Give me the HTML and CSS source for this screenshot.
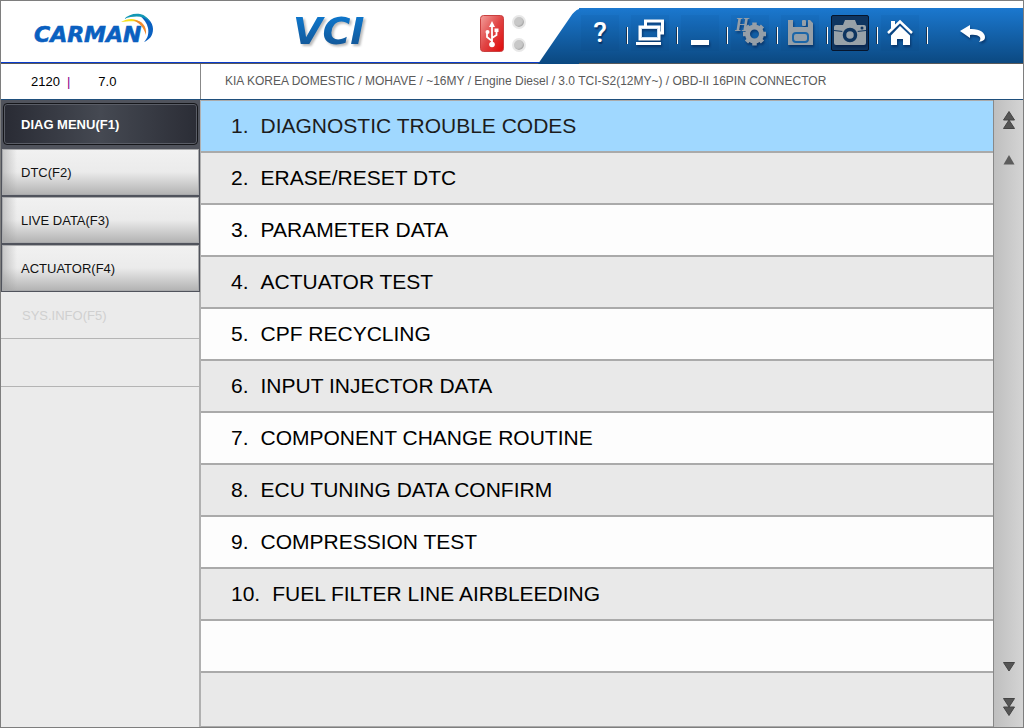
FILE: index.html
```html
<!DOCTYPE html>
<html lang="en">
<head>
<meta charset="utf-8">
<title>CARMAN VCI</title>
<link rel="stylesheet" href="styles.css">
</head>
<body>
<div class="app">
  <header class="header">
    <svg class="logo" width="140" height="40" viewBox="0 0 140 40" role="img" aria-label="CARMAN">
      <text class="logo-text" x="3" y="32">CARMAN</text>
      <path fill="#0a60c0" d="M108 5c8 1 14 7 14 14 0 7-4 11-9 13 4-4 5-9 4-14-1-5-4-9-9-13z"/>
      <path fill="#1398b4" d="M93 9c4-4 10-6 16-5 5 1 8 4 10 8-6-6-14-7-26-3z"/>
      <path fill="#f7e01a" d="M90 12c7-4 15-4 20 1-5-2-10-2-20-1z"/>
      <path fill="#f28a2c" d="M102 10c9 0 14 6 13 15-2-7-6-12-13-15z"/>
    </svg>
    <svg class="vci" width="90" height="44" viewBox="0 0 90 44" role="img" aria-label="VCI">
      <defs><linearGradient id="vciFill" x1="0" y1="0" x2="0" y2="1"><stop offset="0" stop-color="#0d7ed8"/><stop offset="1" stop-color="#14508c"/></linearGradient></defs>
      <text class="vci-text" x="5" y="35" fill="url(#vciFill)">VCI</text>
    </svg>
    <div class="status">
      <svg width="24" height="37" viewBox="0 0 24 37" role="img" aria-label="USB">
        <defs><linearGradient id="usbFill" x1="0" y1="0" x2="1" y2="1"><stop offset="0" stop-color="#f3a09c"/><stop offset=".5" stop-color="#e04444"/><stop offset="1" stop-color="#e00808"/></linearGradient></defs>
        <rect x=".5" y=".5" width="23" height="36" rx="3" fill="url(#usbFill)" stroke="#c94040"/>
        <path d="M12 10v19M12 26l-5-4v-5M12 23l4.500-3v-5" fill="none" stroke="#fff" stroke-width="1.800"/>
        <path d="M12 6l3 6H9zM14.500 13.500h4v3.500h-4z" fill="#fff"/>
        <circle cx="7.500" cy="17" r="2" fill="#fff"/><circle cx="12" cy="29.500" r="2.800" fill="#fff"/>
      </svg>
      <div class="lamps"><span class="lamp"></span><span class="lamp"></span></div>
    </div>
    <nav class="toolbar" aria-label="Tools">
      <svg class="slant" width="41" height="56" viewBox="0 0 41 56" aria-hidden="true">
        <defs><linearGradient id="barFill" x1="0" y1="0" x2="0" y2="1"><stop offset="0" stop-color="#1b78cf"/><stop offset="1" stop-color="#0b4880"/></linearGradient></defs>
        <path d="M0 56L33 8Q38 0 46 0V56z" fill="url(#barFill)"/>
      </svg>
      <div class="tools">
        <div class="tool"><button class="tool-btn help" aria-label="Help">?</button></div>
        <div class="tool"><button class="tool-btn" aria-label="Screens"><svg width="38" height="36" viewBox="0 0 38 36" fill="none" stroke="#fff">
          <path d="M14.500 11V6h17v12h-3" stroke-width="3"/><path d="M9 12h19v12H9z" stroke-width="3"/><path d="M10.500 13.500h16v9h-16z" stroke="#cfe2f4" stroke-width="1"/><path d="M5 28.500h25" stroke-width="3"/></svg></button></div>
        <div class="tool"><button class="tool-btn" aria-label="Minimize"><svg width="38" height="36" viewBox="0 0 38 36"><path d="M10 25h18v5H10z" fill="#fff"/></svg></button></div>
        <div class="tool"><button class="tool-btn" aria-label="Hardware settings"><svg width="38" height="36" viewBox="0 0 38 36">
          <text class="gear-text" x="4" y="16">H</text><path d="M15 12.500v3.500" stroke="#959fa8" stroke-width="2"/>
          <circle cx="23.500" cy="19" r="7" fill="none" stroke="#959fa8" stroke-width="5"/>
          <g stroke="#959fa8" stroke-width="4.500"><path d="M23.500 7.500v4M23.500 26.500v4M12 19h4M31 19h4M15.500 11l3 3M28.500 24l3 3M31.500 11l-3 3M18.500 24l-3 3"/></g></svg></button></div>
        <div class="tool"><button class="tool-btn" aria-label="Save"><svg width="38" height="36" viewBox="0 0 38 36">
          <path d="M7 5h5v7h15V5h2l3 3v22H7z" fill="#959fa8"/>
          <rect x="21" y="5" width="4" height="6" rx="1" fill="#959fa8"/><path d="M7 12h25v2H7z" fill="#959fa8"/>
          <rect x="12" y="18" width="15" height="9" rx="3" fill="none" stroke="#1c66a8" stroke-width="2"/></svg></button></div>
        <div class="tool"><button class="tool-btn active" aria-label="Capture"><svg width="36" height="34" viewBox="1 1 36 34">
          <path d="M3 12q0-2 2-2h7l2-5h10l2 5h7q2 0 2 2v16q0 2-2 2H5q-2 0-2-2z" fill="#98a1a8"/>
          <path d="M3 15.500l9 1M26 16.500l9-1" stroke="#0f3560"/>
          <circle cx="19" cy="20" r="8.500" fill="#98a1a8"/><circle cx="19" cy="20" r="5.500" fill="none" stroke="#0f3560" stroke-width="3.500"/><circle cx="31" cy="13" r="1.500" fill="#0f3560"/></svg></button></div>
        <div class="tool"><button class="tool-btn" aria-label="Home"><svg width="38" height="36" viewBox="0 0 38 36">
          <path d="M10 6h4v5l-4 3z" fill="#fff"/><path d="M7 18L19 6.500 31 18" fill="none" stroke="#fff" stroke-width="2.500"/><path d="M19 11l10 9.500V30h-7v-6h-6v6h-6v-9.500z" fill="#fff"/></svg></button></div>
        <button class="back" aria-label="Back"><svg width="26" height="36" viewBox="0 0 26 36"><path d="M0 16l10-6v4c10-.5 15 4 15 8 0 3-2 4-6 5 4-5-1-8-9-7v3z" fill="#fff"/></svg></button>
      </div>
    </nav>
  </header>
  <div class="infobar">
    <div class="version"><span>2120</span><span class="bar">|</span><span class="number">7.0</span></div>
    <div class="path">KIA KOREA DOMESTIC / MOHAVE / ~16MY / Engine Diesel / 3.0 TCI-S2(12MY~) / OBD-II 16PIN CONNECTOR</div>
  </div>
  <div class="body">
    <nav class="side" aria-label="Menu">
      <div class="side-active">
        <button class="side-btn selected">DIAG MENU(F1)</button>
        <button class="side-btn">DTC(F2)</button>
        <button class="side-btn">LIVE DATA(F3)</button>
        <button class="side-btn">ACTUATOR(F4)</button>
      </div>
      <button class="side-off" disabled>SYS.INFO(F5)</button>
      <div class="side-off"></div>
    </nav>
    <main class="list">
      <button class="row current"><span>1.</span><span>DIAGNOSTIC TROUBLE CODES</span></button>
      <button class="row"><span>2.</span><span>ERASE/RESET DTC</span></button>
      <button class="row"><span>3.</span><span>PARAMETER DATA</span></button>
      <button class="row"><span>4.</span><span>ACTUATOR TEST</span></button>
      <button class="row"><span>5.</span><span>CPF RECYCLING</span></button>
      <button class="row"><span>6.</span><span>INPUT INJECTOR DATA</span></button>
      <button class="row"><span>7.</span><span>COMPONENT CHANGE ROUTINE</span></button>
      <button class="row"><span>8.</span><span>ECU TUNING DATA CONFIRM</span></button>
      <button class="row"><span>9.</span><span>COMPRESSION TEST</span></button>
      <button class="row"><span>10.</span><span>FUEL FILTER LINE AIRBLEEDING</span></button>
      <div class="row"></div>
      <div class="row last"></div>
    </main>
    <div class="scroll">
      <div class="scroll-group">
        <button class="scroll-btn" aria-label="First page"><svg width="14" height="20" viewBox="0 0 14 20" fill="#555" stroke="#444"><path d="M7 10l5.500 8.500h-11zM7 1.500l5.500 8.500h-11z"/></svg></button>
        <button class="scroll-btn" aria-label="Previous page"><svg width="14" height="20" viewBox="0 0 14 20" fill="#5c5c5c"><path d="M7 5l5.500 9.500h-11z"/></svg></button>
      </div>
      <div class="scroll-group">
        <button class="scroll-btn" aria-label="Next page"><svg width="14" height="20" viewBox="0 0 14 20" fill="#555" stroke="#444"><path d="M1.500 5.500h11L7 14z"/></svg></button>
        <button class="scroll-btn" aria-label="Last page"><svg width="14" height="20" viewBox="0 0 14 20" fill="#555" stroke="#444"><path d="M1.500 1.500h11L7 10zM1.500 10h11L7 18.500z"/></svg></button>
      </div>
    </div>
  </div>
</div>
</body>
</html>
```
FILE: styles.css
```css
* { box-sizing: border-box; }
body { margin: 0; font-family: "Liberation Sans", Arial, sans-serif; background: #fff; }
button { font: inherit; color: inherit; border: 0; background: none; padding: 0; margin: 0; text-align: left; }
svg { display: block; flex: none; }

.app { display: flex; flex-direction: column; min-height: 100vh; border: 1px solid #7e7e7e; }

.header { display: flex; align-items: flex-start; height: 62px; background: linear-gradient(#0a3ccc, #0a3ccc) left bottom 0 / 100% 1px no-repeat #fff; }
.logo { margin: 9px 0 0 30px; }
.logo-text { font: italic bold 22px "DejaVu Sans", sans-serif; fill: #0a60c0; stroke: #0a60c0; stroke-width: .6px; }
.vci { margin: 8px 0 0 117px; filter: drop-shadow(2px 2px 1px #bbb); }
.vci-text { font: italic bold 38px "DejaVu Sans", sans-serif; }
.status { display: flex; gap: 8px; margin: 14px 0 0 102px; }
.lamps { display: flex; flex-direction: column; gap: 9px; }
.lamp { width: 14px; height: 14px; border: 2px solid #e8e8e8; border-radius: 50%; background: #c8c8c8; box-shadow: inset -1px -1px 1px #aaa; }

.toolbar { display: flex; flex: 1; height: 56px; margin: 7px 0 -1px 12px; }
.slant { position: relative; z-index: 1; }
.tools { display: flex; flex: 1; align-items: flex-start; padding-top: 7px; background: linear-gradient(#1b78cf, #0b4880); }
.tool { display: flex; align-items: center; width: 50px; padding-left: 2px; background: linear-gradient(90deg, #1d3550 1px, #fff 1px) 47px 12px / 2px 17px no-repeat; }
.tool-btn { display: flex; align-items: center; justify-content: center; width: 38px; height: 36px; background: rgba(0, 50, 110, .06); }
.tool-btn svg, .back svg { filter: drop-shadow(1px 2px 1px rgba(0, 20, 60, .5)); }
.help { color: #fff; font: 500 28px/38px Roboto, sans-serif; text-shadow: 1px 2px 1px rgba(0, 20, 60, .5); }
.gear-text { font: italic bold 18px "Liberation Serif", serif; fill: #959fa8; }
.active { border: 1px solid #06152c; border-radius: 2px; background: #0f3560; }
.back { width: 26px; margin: 0 auto 0 31px; }

.infobar { display: flex; height: 37px; border-top: 1px solid #5a5a5a; border-bottom: 1px solid #1f4f7c; background: #fff; }
.version { display: flex; align-items: center; width: 200px; padding-left: 30px; border-right: 1px solid #888; font-size: 13px; color: #000; }
.bar { margin-left: 7px; color: #8a008a; }
.number { margin-left: 28px; }
.path { flex: 1; padding: 9px 0 0 24px; font-size: 12px; line-height: 16px; color: #5a5a5a; white-space: nowrap; }

.body { display: flex; flex: 1; }
.side { width: 200px; background: #ebebeb; border-right: 2px solid #b0b0b0; }
.side-active { display: flex; flex-direction: column; gap: 2px; width: 199px; padding: 1px; background: #50535c; }
.side-btn { height: 46px; padding-left: 18px; border: 1px solid #a8a9ab; background: linear-gradient(90deg, rgba(150, 150, 150, .45), rgba(240, 240, 240, 0) 14px), linear-gradient(#f1f1f1, #ebebeb 50%, #b4b4b4); font-size: 13px; color: #111; }
.selected { height: 42px; margin: 2px 1px; border: 1px solid #15161a; border-radius: 4px; background: linear-gradient(90deg, #292b34, #454952 50%, #2b2d36); box-shadow: inset 0 0 0 1px #5a5d66; padding-left: 17px; font-weight: bold; color: #fff; }
.side-off { display: block; width: 100%; height: 48px; padding-left: 21px; border-bottom: 1px solid #b4b4b4; font-size: 13px; color: #d0d0d0; }
button.side-off { height: 47px; }

.list { display: flex; flex: 1; flex-direction: column; border-top: 1px solid #aaa; }
.row { display: flex; align-items: center; gap: 12px; min-height: 52px; padding-left: 30px; border-bottom: 2px solid #aaa; background: #fdfdfd; font-size: 21px; color: #000; }
.row:nth-child(even) { background: #e9e9e9; }
.row.current { background: #a0d8ff; color: #1c1c1c; }
.row.last { flex: 1; border-bottom-width: 1px; }

.scroll { display: flex; flex-direction: column; justify-content: space-between; width: 30px; padding: 10px 0; border-left: 1px solid #888; background: linear-gradient(90deg, #bfbfbf, #d4d4d4); }
.scroll-group { display: flex; flex-direction: column; align-items: center; gap: 20px; }
```
